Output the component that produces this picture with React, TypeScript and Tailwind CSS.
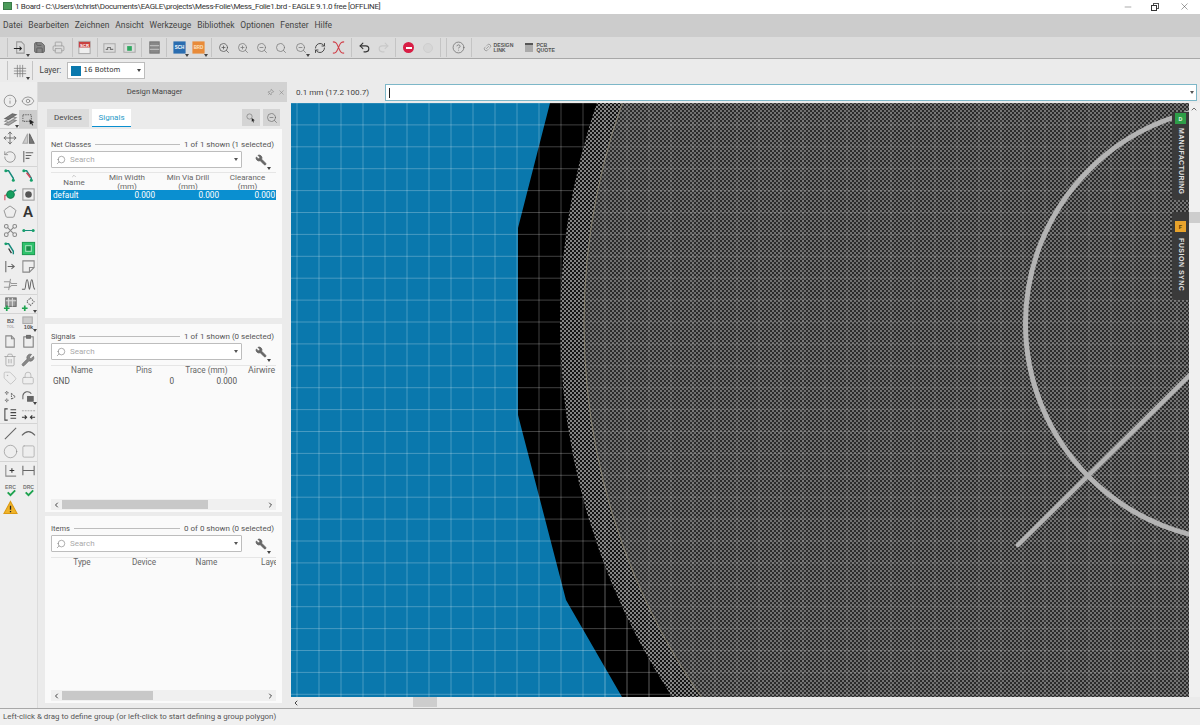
import React from "react";
import { Info, Eye, Move, RotateCcw, Pentagon, Trash2, Wrench, Tag, Lock, Circle, Square, Search, ZoomIn, ZoomOut, RefreshCw, Undo2, Redo2, Minus, X, ChevronLeft, ChevronRight, ChevronUp, Link2, Save, Printer, HelpCircle, Pin } from "lucide-react";

const FONT = "font-['Roboto','Noto_Sans',sans-serif]";

function S({ children, s = 15 }: { children: React.ReactNode; s?: number }) {
  return <svg viewBox="0 0 16 16" width={s} height={s} fill="none" stroke="#666" strokeWidth={1.1}>{children}</svg>;
}
function Arrow() {
  return <span className="absolute right-0 bottom-0 w-0 h-0 border-l-[2.5px] border-r-[2.5px] border-t-[3px] border-l-transparent border-r-transparent border-t-[#444]" />;
}
function Drop({ children }: { children: React.ReactNode }) {
  return <span className="relative flex items-center justify-center w-full h-full">{children}<Arrow /></span>;
}
const L = { size: 14, strokeWidth: 1.2, color: "#777" };

const Route = ({ red }: { red?: boolean }) => (
  <S>
    <path d="M3 3h3l5 8v2" stroke="#188a7c" strokeWidth={1.5} />
    {red && <path d="M6 5l4 5" stroke="#d0455a" strokeWidth={1.8} />}
    <circle cx="3" cy="3" r="1.6" fill="#17a06a" stroke="none" />
    <circle cx="11" cy="13" r="1.6" fill="#17a06a" stroke="none" />
  </S>
);
const Plus = () => <path d="M1 12h6M4 9v6" stroke="#1ea34f" strokeWidth={1.8} />;
const Txt = ({ t, x = 8, y = 8, c = "#555", z = 6 }: { t: string; x?: number; y?: number; c?: string; z?: number }) => (
  <text x={x} y={y} textAnchor="middle" fontSize={z} fontWeight={700} fill={c} stroke="none" fontFamily="Liberation Sans, sans-serif">{t}</text>
);

const toolRows: [React.ReactNode, React.ReactNode][][] = [
  [
    [<Info {...L} />, <Eye {...L} />],
    [<Drop><S><path d="M2 13l8-5 4 1-8 5z" fill="#aaa" stroke="#888" /><path d="M2 10l8-5 4 1-8 5z" fill="#ddd" stroke="#888" /><path d="M2 7l8-5 4 1-8 5z" fill="#777" stroke="#666" /></S></Drop>,
      <span className="flex items-center justify-center w-[18px] h-[18px] bg-[#cdcdcd]"><S><rect x="2" y="3" width="9" height="7" strokeDasharray="1.5 1" /><path d="M9 8l5 3-2 .7 1 2.3-1 .5-1-2.3-1.5 1z" fill="#222" stroke="none" /></S></span>],
  ],
  [
    [<Move {...L} color="#444" />, <S><path d="M7 3v10H2z" fill="#ccc" stroke="#aaa" /><path d="M9 3v10h5z" fill="#777" /></S>],
    [<RotateCcw {...L} />, <S><path d="M3 2v12" /><path d="M5 4h8M5 7h6M5 10h4" /></S>],
  ],
  [
    [<Route />, <Route red />],
    [<S><path d="M2 14V9l3-1" stroke="#d0455a" /><circle cx="8" cy="8" r="4" fill="#14a060" stroke="#127a4a" /><path d="M11 5l3-2" stroke="#188a7c" strokeWidth={1.6} /></S>, <S><rect x="2" y="2" width="12" height="12" stroke="#999" /><circle cx="8" cy="8" r="3.5" fill="#555" stroke="none" /></S>],
    [<Pentagon {...L} color="#666" strokeWidth={1.1} />, <span className="text-[15px] leading-none font-semibold text-[#333]">A</span>],
    [<S><circle cx="3.5" cy="3.5" r="2" stroke="#888" /><circle cx="12.5" cy="3.5" r="2" stroke="#888" /><circle cx="3.5" cy="12.5" r="2" stroke="#888" /><circle cx="12.5" cy="12.5" r="2" stroke="#888" /><path d="M5 5l6 6M11 5l-6 6" stroke="#888" /></S>, <S><path d="M4 8h8" stroke="#188a7c" /><circle cx="3" cy="8" r="1.6" fill="#17a06a" stroke="none" /><circle cx="13" cy="8" r="1.6" fill="#17a06a" stroke="none" /></S>],
    [<S><path d="M2 3h4l5 8v3" stroke="#188a7c" strokeWidth={1.5} /><path d="M6 8l3 5" stroke="#333" strokeWidth={1.4} /><circle cx="3" cy="3" r="1.5" fill="#17a06a" stroke="none" /></S>, <S><rect x="1.5" y="1.5" width="13" height="13" fill="#2fc26c" stroke="#1c9a50" /><rect x="5" y="5" width="6" height="6" fill="#1a8d4a" stroke="#a8e6c0" /></S>],
    [<S><path d="M3 2v12" /><path d="M5 8h7M9 5.5 12 8l-3 2.5" /></S>, <S><path d="M2 2h12v7l-5 5H2z" stroke="#888" /><path d="M9 14V9h5" stroke="#888" /></S>],
    [<S><path d="M1 5h6l2 2h6M1 11h6l2-2h6M8 2l-2 12" stroke="#999" /></S>, <S><path d="M1 13h3c1 0 1-10 2.5-10S8 13 9 13s1-10 2.5-10 1 10 3.5 10" stroke="#666" /></S>],
  ],
  [
    [<S><rect x="3" y="1" width="11" height="9" fill="#999" stroke="#666" /><path d="M3 4h11M6 1v9M10 1v9" stroke="#ddd" /><Plus /></S>, <Drop><S><path d="M10 1l4 4-4 4-4-4z" strokeDasharray="1.5 1" /><Plus /></S></Drop>],
  ],
  [
    [<S><Txt t="B2" y={7} /><Txt t="TOL" y={13} z={4} c="#aaa" /></S>, <Drop><S><rect x="2" y="1" width="10" height="7" fill="#ccc" stroke="#aaa" /><Txt t="10k" y={14} /></S></Drop>],
    [<S><path d="M3 2h6v3h3v9H3z" stroke="#888" /><path d="M9 2l3 3" stroke="#888" /></S>, <S><rect x="3" y="3" width="10" height="11" stroke="#777" /><rect x="6" y="1.5" width="4" height="3" fill="#777" /></S>],
    [<Trash2 {...L} color="#999" />, <Wrench {...L} color="#666" fill="#888" />],
    [<Tag {...L} color="#b5b5b5" />, <Lock {...L} color="#aaa" />],
    [<S><path d="M4 2v4M2 4h4M4 10v4M2 12h4M9 5l4 3-4 3z" strokeDasharray="1.5 1" /></S>, <Drop><S><path d="M2 11V7a5 5 0 0 1 9-2" /><rect x="7" y="8" width="6" height="5" fill="#666" /></S></Drop>],
    [<S><path d="M5 2H2v12h3M8 3h6M8 6h6M8 9h6M8 12h6" stroke="#444" /></S>, <S><path d="M1 4h14" strokeDasharray="2 1" stroke="#aaa" /><path d="M1 11h5M4 9l2 2-2 2M15 11h-5M12 9l-2 2 2 2" stroke="#333" /></S>],
  ],
  [
    [<S><path d="M2 14 14 2" stroke="#666" /></S>, <S><path d="M1 10Q8 2 15 10" stroke="#666" /></S>],
    [<Circle {...L} size={15} color="#888" strokeWidth={1} />, <Square {...L} size={15} color="#999" strokeWidth={1} />],
  ],
  [
    [<S><path d="M3 2v12h11" stroke="#888" /><path d="M7 8h5M9.5 5.5v5" stroke="#333" /></S>, <S><path d="M2 3v10M14 3v10M2 8h12" stroke="#666" /></S>],
    [<S><Txt t="ERC" y={7} z={5.5} c="#777" /><path d="M5 11l3 3 5-5" stroke="#1ea34f" strokeWidth={2} /></S>, <S><Txt t="DRC" y={7} z={5.5} c="#777" /><path d="M5 11l3 3 5-5" stroke="#1ea34f" strokeWidth={2} /></S>],
    [<S><path d="M8 1.5 15 14.5H1z" fill="#f0b429" stroke="#dc9a12" /><path d="M8 6v4.5M8 11.8v1.2" stroke="#222" strokeWidth={1.4} /></S>, null],
  ],
];

function ToolColumn() {
  return (
    <div className="w-[38px] shrink-0 flex flex-col bg-[#eeeeee] border-r border-[#dcdcdc] pt-[10px]">
      {toolRows.map((g, i) => (
        <div key={i} className={`flex flex-col ${i < toolRows.length - 1 ? "border-b border-[#d4d4d4]" : ""}`}>
          {g.map((r, j) => (
            <div key={j} className="flex h-[18.2px] pl-[1px]">
              <span className="flex items-center justify-center w-[18px] h-full relative">{r[0]}</span>
              <span className="flex items-center justify-center w-[18px] h-full relative">{r[1]}</span>
            </div>
          ))}
        </div>
      ))}
    </div>
  );
}

const Sep = () => <span className="w-px h-[19px] mx-[2.5px] bg-[#c4c4c4] shrink-0" />;
const TB = ({ children }: { children?: React.ReactNode }) => <span className="w-[19.2px] h-[19px] shrink-0 flex items-center justify-center relative">{children}</span>;
const Z = ({ Icon = ZoomIn, c = "#777" }: { Icon?: typeof ZoomIn; c?: string }) => <Icon size={12} strokeWidth={1.5} color={c} />;

function Toolbar() {
  return (
    <div className="h-[22px] bg-[#dcdcdc] border-b border-[#a8a8a8] flex items-center pl-[4.4px] shrink-0">
      <Sep />
      <TB><Drop><S><path d="M5 2h5l3 3v9H5z" stroke="#999" /><path d="M2 9h8M8 7l2 2-2 2" stroke="#222" /></S></Drop></TB>
      <TB><Save size={13} strokeWidth={1.5} color="#555" fill="#888" /></TB>
      <TB><Printer size={13} strokeWidth={1.4} color="#999" /></TB>
      <span className="w-[1.2px]" />
      <Sep />
      <TB><S><rect x="2" y="1.5" width="12" height="13" fill="#eee" stroke="#aaa" /><rect x="2" y="2" width="12" height="6" fill="#c9403f" stroke="none" /><Txt t="SCR" y={7} z={4.5} c="#fff" /></S></TB>
      <Sep />
      <TB><S><path d="M2 4h12v9H2z" stroke="#aaa" /><path d="M4 10h2v-2h3v2h3" stroke="#777" /></S></TB>
      <TB><S><path d="M2 4h12v9H2z" stroke="#aaa" /><rect x="5.5" y="6.5" width="5" height="5" fill="#2fa860" stroke="none" /></S></TB>
      <Sep />
      <TB><S><rect x="3" y="2" width="10" height="12" fill="#888" stroke="#777" /><path d="M3 6h10M3 10h10" stroke="#bbb" /></S></TB>
      <Sep />
      <TB><Drop><S><rect x="1.5" y="1.5" width="13" height="13" fill="#2a6db0" stroke="none" /><Txt t="SCH" y={10} z={4.8} c="#fff" /></S></Drop></TB>
      <TB><Drop><S><rect x="1.5" y="1.5" width="13" height="13" fill="#e88b3a" stroke="none" /><Txt t="BRD" y={10} z={4.8} c="#fde3c4" /></S></Drop></TB>
      <Sep />
      <TB><Z Icon={ZoomIn} c="#555" /></TB>
      <TB><Z Icon={ZoomIn} /></TB>
      <TB><Z Icon={ZoomOut} /></TB>
      <TB><Z Icon={Search} /></TB>
      <TB><Drop><Z Icon={ZoomOut} /></Drop></TB>
      <TB><RefreshCw size={12} strokeWidth={1.9} color="#444" /></TB>
      <TB><S><path d="M2 2c3 0 4 1 6 6s3 6 6 6M14 2c-3 0-4 1-6 6s-3 6-6 6" stroke="#d0404a" /></S></TB>
      <Sep />
      <TB><Undo2 size={13} strokeWidth={2} color="#333" /></TB>
      <TB><Redo2 size={13} strokeWidth={2} color="#c8c8c8" /></TB>
      <Sep />
      <TB><span className="flex w-[11px] h-[11px] rounded-full bg-[#d81e45] items-center justify-center"><span className="w-[6px] h-[2px] bg-white" /></span></TB>
      <TB><span className="w-[10px] h-[10px] rounded-full border border-[#cfcfcf] bg-[#d6d6d6]" /></TB>
      <Sep />
      <Sep />
      <TB><HelpCircle size={13} strokeWidth={1.3} color="#666" /></TB>
      <Sep />
      <span className="ml-[8px] flex items-center gap-[2px] text-[5.2px] leading-[4.6px] font-bold text-[#555] font-['Liberation_Sans',sans-serif]">
        <Link2 size={9} strokeWidth={1.4} color="#777" className="-rotate-45" />
        <span>DESIGN<br />LINK</span>
      </span>
      <span className="ml-[12px] flex items-center gap-[3px] text-[5.2px] leading-[4.6px] font-bold text-[#555] font-['Liberation_Sans',sans-serif]">
        <span className="w-[8px] h-[9px] bg-[#aaa] border-t-2 border-[#555]" />
        <span>PCB<br />QUOTE</span>
      </span>
    </div>
  );
}

function LayerBar() {
  return (
    <div className="h-[23px] bg-[#ebebeb] flex items-center pl-[4px] shrink-0">
      <Sep />
      <span className="w-[20px] h-[19px] relative flex items-center justify-center">
        <Drop><S s={14}><path d="M1 5h14M1 8h14M1 11h14M5 1v14M8 1v14M11 1v14" stroke="#777" strokeWidth={0.8} /></S></Drop>
      </span>
      <span className="w-px h-[19px] bg-[#c4c4c4] ml-[1.5px]" />
      <span className="ml-[7px] w-[20px] text-[8.2px] text-[#444]">Layer:</span>
      <span className="ml-[7px] w-[78px] h-[17px] bg-white border border-[#bcbcbc] flex items-center pl-[3px] relative">
        <span className="w-[10px] h-[10px] bg-[#0a78ad]" />
        <span className="ml-[3px] text-[7px] text-[#333] font-['DejaVu_Sans',sans-serif]">16 Bottom</span>
        <span className="absolute right-[3px] top-[6px] w-0 h-0 border-l-[2.5px] border-r-[2.5px] border-t-[3px] border-l-transparent border-r-transparent border-t-[#444]" />
      </span>
    </div>
  );
}

function SearchRow() {
  return (
    <div className="flex items-center mt-[1px]">
      <div className="w-[191px] h-[17px] bg-white border border-[#bdbdbd] rounded-[1px] flex items-center pl-[4px] relative">
        <Search size={10} strokeWidth={1.4} color="#777" className="-scale-x-100" />
        <span className="ml-[4px] text-[8px] text-[#aaa]">Search</span>
        <span className="absolute right-[3px] top-[6px] w-0 h-0 border-l-[2px] border-r-[2px] border-t-[3px] border-l-transparent border-r-transparent border-t-[#555]" />
      </div>
      <span className="relative ml-[11px] w-[16px] h-[16px] flex items-center justify-center">
        <Wrench size={12} strokeWidth={1.4} color="#666" fill="#666" className="-scale-x-100" />
        <span className="absolute -right-[2px] -bottom-[2px]"><Arrow /></span>
      </span>
    </div>
  );
}

function HScroll({ thumb }: { thumb: string }) {
  return (
    <div className="ml-[6px] w-[225px] h-[11px] mb-[2px] bg-[#f0f0f0] flex items-center shrink-0">
      <ChevronLeft size={8} strokeWidth={3} color="#444" className="w-[11px] shrink-0" />
      <span className={`h-[9px] bg-[#c8c8c8] ${thumb}`} />
      <span className="flex-1" />
      <ChevronRight size={8} strokeWidth={3} color="#444" className="w-[11px] shrink-0" />
    </div>
  );
}

function Section({ title, count, h, pt, children, scroll }: { title: string; count: string; h: string; pt: string; children: React.ReactNode; scroll?: string }) {
  return (
    <div className={`bg-[#fafafa] flex flex-col ${h} ${pt} overflow-hidden`}>
      <div className="flex items-center pl-[6px] h-[11px] text-[#555] w-[229px]">
        <span className="text-[7.5px]">{title}</span>
        <span className="mx-[4px] flex-1 h-px bg-[#bdbdbd]" />
        <span className="whitespace-nowrap text-[8px]">{count}</span>
      </div>
      <div className="pl-[6px]"><SearchRow /></div>
      <div className="flex-1 min-h-0">{children}</div>
      {scroll && <HScroll thumb={scroll} />}
    </div>
  );
}

const Head = ({ c, children }: { c: string; children: React.ReactNode }) => (
  <span className={`text-center leading-[9px] text-[#666] ${c}`}>{children}</span>
);

function DesignManager() {
  return (
    <div className="w-[249px] shrink-0 bg-[#ebebeb] flex flex-col">
      <div className="h-[20px] bg-[#d2d2d2] relative flex items-center justify-center text-[7.7px] text-[#444] pr-[16px] shrink-0">
        Design Manager
        <Pin size={7} strokeWidth={1.6} color="#777" className="absolute right-[13px] top-[7px] rotate-45" />
        <X size={7} strokeWidth={1.6} color="#777" className="absolute right-[2px] top-[7px]" />
      </div>
      <div className="h-[27px] flex items-end pl-[9px] relative shrink-0 pb-[2px]">
        <span className="w-[42px] h-[18px] bg-[#dcdcdc] flex items-center justify-center text-[8px] text-[#444]">Devices</span>
        <span className="ml-[3px] w-[39px] h-[18px] bg-white border-b-[1.5px] border-[#0a8fd0] flex items-center justify-center text-[8px] text-[#2a9bc8]">Signals</span>
        <span className="absolute left-[204px] top-[7px] w-[18px] h-[17px] bg-[#d4d4d4] flex items-center justify-center"><S s={12}><circle cx="6" cy="6" r="3.5" stroke="#888" /><path d="M9 8l4 3-2 .5 1 2-1 .5-1-2-1 1z" fill="#222" stroke="none" /></S></span>
        <span className="absolute left-[225px] top-[7px] w-[17px] h-[17px] bg-[#d4d4d4] flex items-center justify-center"><ZoomOut size={12} strokeWidth={1.3} color="#666" /></span>
      </div>
      <div className="ml-[7px] w-[237px] flex flex-col">
        <Section title="Net Classes" count="1 of 1 shown (1 selected)" h="h-[189px]" pt="pt-[10px]">
          <div className="pl-[6px] mt-[4px] w-[231px]">
            <div className="h-[18px] overflow-hidden flex text-[8px] border-t border-[#e6e6e6] relative">
              <ChevronUp size={6} strokeWidth={1.5} color="#777" className="absolute left-[20px] top-0" />
              <Head c="w-[46px] pt-[5px]">Name</Head>
              <Head c="w-[60px]">Min Width<br />(mm)</Head>
              <Head c="w-[62px]">Min Via Drill<br />(mm)</Head>
              <Head c="w-[57px]">Clearance<br />(mm)</Head>
            </div>
            <div className="h-[10px] bg-[#0a8fd0] flex items-center text-[8.2px] text-white w-[225px]">
              <span className="w-[46px] pl-[2px]">default</span>
              <span className="w-[58px] text-right">0.000</span>
              <span className="w-[64px] text-right">0.000</span>
              <span className="w-[56px] text-right">0.000</span>
            </div>
          </div>
        </Section>
        <div className="h-[6px]" />
        <Section title="Signals" count="1 of 1 shown (0 selected)" h="h-[188px]" pt="pt-[7px]" scroll="w-[146px]">
          <div className="pl-[6px] mt-[5px] w-[231px]">
            <div className="h-[11px] overflow-hidden flex text-[8.2px] border-t border-[#e6e6e6] relative w-[225px]">
              <ChevronUp size={6} strokeWidth={1.5} color="#777" className="absolute left-[28px] top-0" />
              <Head c="w-[62px]">Name</Head>
              <Head c="w-[62px]">Pins</Head>
              <Head c="w-[63px]">Trace (mm)</Head>
              <Head c="w-[38px] pl-[10px] whitespace-nowrap overflow-hidden !text-left text-[8.8px]">Airwire (mm)</Head>
            </div>
            <div className="h-[11px] flex items-center text-[8.2px] text-[#555]">
              <span className="w-[60px] pl-[2px]">GND</span>
              <span className="w-[63px] text-right">0</span>
              <span className="w-[63px] text-right">0.000</span>
            </div>
          </div>
        </Section>
        <div className="h-[4px]" />
        <Section title="Items" count="0 of 0 shown (0 selected)" h="h-[187px]" pt="pt-[7px]" scroll="w-[91px]">
          <div className="pl-[6px] mt-[5px] w-[231px]">
            <div className="h-[11px] overflow-hidden flex text-[8.2px] border-t border-[#e6e6e6] relative w-[225px]">
              <ChevronUp size={6} strokeWidth={1.5} color="#777" className="absolute left-[28px] top-0" />
              <Head c="w-[62px]">Type</Head>
              <Head c="w-[62px]">Device</Head>
              <Head c="w-[63px]">Name</Head>
              <Head c="w-[38px] pl-[23px] whitespace-nowrap overflow-hidden !text-left">Layer</Head>
            </div>
          </div>
        </Section>
      </div>
    </div>
  );
}

const gx = Array.from({ length: 42 }, (_, i) => 297 + i * 22);
const gy = Array.from({ length: 28 }, (_, i) => 103 + i * 21.9);

function Board() {
  return (
    <svg viewBox="291 103 898 594" preserveAspectRatio="none" className="block w-[898px] h-[594px]">
      <defs>
        <pattern id="hatch" width="4" height="4" patternUnits="userSpaceOnUse">
          <rect width="4" height="4" fill="#8e8e8e" />
          <rect x="0" y="0" width="2" height="2" fill="#141414" />
          <rect x="2" y="2" width="2" height="2" fill="#141414" />
        </pattern>
        <pattern id="fine" width="4" height="4" patternUnits="userSpaceOnUse">
          <rect width="4" height="4" fill="#767676" />
          <rect x="0" y="0" width="2" height="2" fill="#262626" />
          <rect x="2" y="2" width="2" height="2" fill="#262626" />
        </pattern>
      </defs>
      <rect x="291" y="103" width="898" height="594" fill="#000" />
      <polygon points="291,103 550,103 518,228 518,415 566,600 622,697 291,697" fill="#0a78ad" />
      <g stroke="#fff" strokeOpacity="0.25" strokeWidth="1">
        {gx.map((x) => <line key={x} x1={x} x2={x} y1={103} y2={697} />)}
        {gy.map((y) => <line key={y} y1={y} y2={y} x1={291} x2={1189} />)}
      </g>
      <circle cx="1238" cy="323.5" r="678" fill="url(#hatch)" fillOpacity="0.93" />
      <circle cx="1238" cy="323.5" r="654" fill="#4a4a4a" />
      <circle cx="1238" cy="323.5" r="654" fill="url(#fine)" fillOpacity="0.9" stroke="#8f8870" strokeWidth="0.8" />
      <g stroke="#fff" strokeOpacity="0.13" strokeWidth="1">
        {gx.filter((x) => x > 600).map((x) => <line key={x} x1={x} x2={x} y1={103} y2={697} />)}
      </g>
      <g stroke="#fff" strokeOpacity="0.13" strokeWidth="1">
        <clipPath id="disc"><circle cx="1238" cy="323.5" r="654" /></clipPath>
        <g clipPath="url(#disc)">
          {gy.map((y) => <line key={y} y1={y} y2={y} x1={291} x2={1189} />)}
        </g>
      </g>
      <circle cx="1243" cy="323.5" r="217.5" fill="none" stroke="#b4b4b4" strokeWidth="5" />
      <line x1="1018" y1="545" x2="1195" y2="370" stroke="#b4b4b4" strokeWidth="4.5" strokeLinecap="round" />
    </svg>
  );
}

export default function App() {
  return (
    <div className={`w-[1200px] h-[725px] overflow-hidden flex flex-col bg-[#ebebeb] text-[#444] ${FONT}`}>
      <div className="h-[14px] bg-white flex items-center relative shrink-0">
        <span className="absolute left-[3px] top-[2px] w-[9px] h-[8px] bg-[#4c9a5a] border border-[#3a7a48]" />
        <span className="ml-[15px] text-[8px] tracking-[-0.33px] text-[#333] whitespace-nowrap">1 Board - C:\Users\tchrist\Documents\EAGLE\projects\Mess-Folie\Mess_Folie1.brd - EAGLE 9.1.0 free [OFFLINE]</span>
        <Minus size={10} strokeWidth={1} color="#333" className="absolute left-[1123px] top-[2px]" />
        <span className="absolute left-[1153px] top-[3px] w-[6px] h-[6px] border border-[#555]" />
        <span className="absolute left-[1151px] top-[5px] w-[6px] h-[6px] border border-[#333] bg-white" />
        <X size={11} strokeWidth={1} color="#333" className="absolute left-[1179px] top-[1px]" />
      </div>
      <div className="h-[23px] bg-[#cccccc] flex items-center pl-[3px] gap-[5.8px] text-[8.5px] text-[#444] shrink-0">
        {["Datei", "Bearbeiten", "Zeichnen", "Ansicht", "Werkzeuge", "Bibliothek", "Optionen", "Fenster", "Hilfe"].map((m) => <span key={m}>{m}</span>)}
      </div>
      <Toolbar />
      <LayerBar />
      <div className="flex-1 min-h-0 flex">
        <ToolColumn />
        <DesignManager />
        <div className="flex-1 min-w-0 flex flex-col pl-[4px] relative">
          <div className="h-[21px] flex items-center shrink-0">
            <span className="ml-[5px] w-[89px] text-[8.1px] text-[#444] whitespace-nowrap">0.1 mm (17.2 100.7)</span>
            <div className="w-[812px] h-[17px] bg-white border border-[#7db7c8] relative flex items-center pl-[3px]">
              <span className="w-px h-[10px] bg-[#222]" />
              <span className="absolute right-[2px] top-[6px] w-0 h-0 border-l-[2px] border-r-[2px] border-t-[3px] border-l-transparent border-r-transparent border-t-[#555]" />
            </div>
          </div>
          <div className="flex h-[594px] shrink-0">
            <Board />
            <div className="w-[11px] bg-[#f0f0f0] relative">
              <ChevronUp size={8} strokeWidth={2.5} color="#555" className="absolute left-[1px] top-[2px]" />
              <span className="absolute left-0 top-[109px] w-[11px] h-[11px] bg-[#cdcdcd]" />
            </div>
          </div>
          <div className="h-[11px] flex items-center shrink-0 relative">
            <ChevronLeft size={8} strokeWidth={3} color="#444" className="ml-[1px]" />
            <span className="absolute left-[122px] top-0 w-[24px] h-[10px] bg-[#cdcdcd]" />
          </div>
          <div className="absolute left-[885px] top-[30px] w-[17px] h-[88px] bg-[#3a3a3a] rounded-l-[2px] flex flex-col items-center pt-[1px]">
            <span className="w-[11px] h-[11px] bg-[#2e9e48] flex items-center justify-center text-[6px] font-bold text-[#d8f0dc] leading-none">D</span>
            <span className="mt-[4px] [writing-mode:vertical-rl] text-[7px] font-semibold tracking-[0.35px] text-[#e2e2e2] font-['Liberation_Sans',sans-serif]">MANUFACTURING</span>
          </div>
          <div className="absolute left-[885px] top-[130px] w-[17px] h-[88px] bg-[#3a3a3a] rounded-l-[2px] flex flex-col items-center pt-[9px]">
            <span className="w-[11px] h-[11px] bg-[#e8a32c] flex items-center justify-center text-[6px] font-bold text-[#5a3a00] leading-none">F</span>
            <span className="mt-[6px] [writing-mode:vertical-rl] text-[7px] font-semibold tracking-[0.5px] text-[#e2e2e2] font-['Liberation_Sans',sans-serif]">FUSION SYNC</span>
          </div>
        </div>
      </div>
      <div className="h-[17px] bg-[#f0f0f0] border-t border-[#a8a8a8] flex items-center pl-[3px] text-[7.9px] text-[#555] shrink-0">
        Left-click &amp; drag to define group (or left-click to start defining a group polygon)
      </div>
    </div>
  );
}
